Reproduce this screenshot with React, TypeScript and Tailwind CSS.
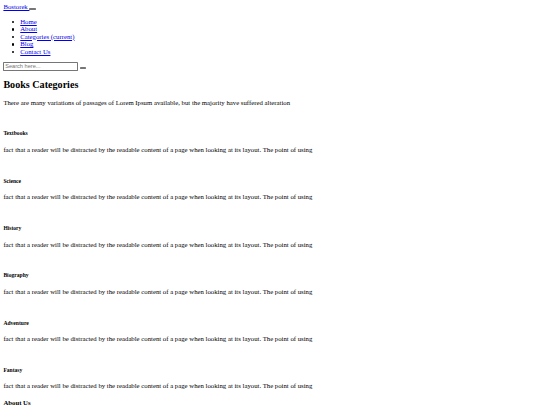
import React from "react";

const NAV = ["Home", "About", "Categories (current)", "Blog", "Contact Us"];
const CATEGORIES = ["Textbooks", "Science", "History", "Biography", "Adventure", "Fantasy"];
const BLURB =
  "fact that a reader will be distracted by the readable content of a page when looking at its layout. The point of using";

// empty native-looking button (navbar toggler / search submit)
function BareButton() {
  return (
    <button
      type="button"
      className="inline-block h-[6px] w-[16px] rounded-[2px] border border-[#767676] bg-[#efefef] align-baseline"
    />
  );
}

export default function App() {
  return (
    <div className="w-[1280px] [zoom:0.421875] bg-white p-2 font-['Liberation_Serif',serif] text-[16px] leading-[1.111] text-black">
      <div>
        <a href="#" className="text-[#0000ee] underline">
          Bostorek <span />
        </a>
        <BareButton />
      </div>

      <ul className="my-4 pl-10">
        {NAV.map((item) => (
          <li key={item} className="-ml-[20px] flex items-start">
            <span className="w-[20px] shrink-0">
              <span className="mt-[8px] block h-[5px] w-[5px] rounded-full bg-black" />
            </span>
            <a href="#" className="text-[#0000ee] underline">
              {item}
            </a>
          </li>
        ))}
      </ul>

      <form onSubmit={(e) => e.preventDefault()}>
        <input
          type="text"
          placeholder="Search here..."
          className="h-[21px] w-[177px] rounded-[2px] border border-[#767676] px-[2px] align-baseline font-['Liberation_Sans',Arial,sans-serif] text-[13.33px] placeholder:text-[#757575]"
        />{" "}
        <BareButton />
      </form>

      <h2 className="my-[0.83em] text-[24px] font-bold">Books Categories</h2>
      <p className="my-4">
        There are many variations of passages of Lorem Ipsum available, but the majority have suffered alteration
      </p>

      {CATEGORIES.map((name) => (
        <div key={name}>
          <div className="h-[19.3px]" />
          <h5 className="my-[1.67em] text-[13.28px] font-bold">{name}</h5>
          <p className="my-4">{BLURB}</p>
        </div>
      ))}

      <h4 className="my-[1.33em] text-[16px] font-bold">About Us</h4>
      <p className="my-4">
        There are many variations of passages of Lorem Ipsum available, but the majority have suffered alteration
      </p>
    </div>
  );
}
